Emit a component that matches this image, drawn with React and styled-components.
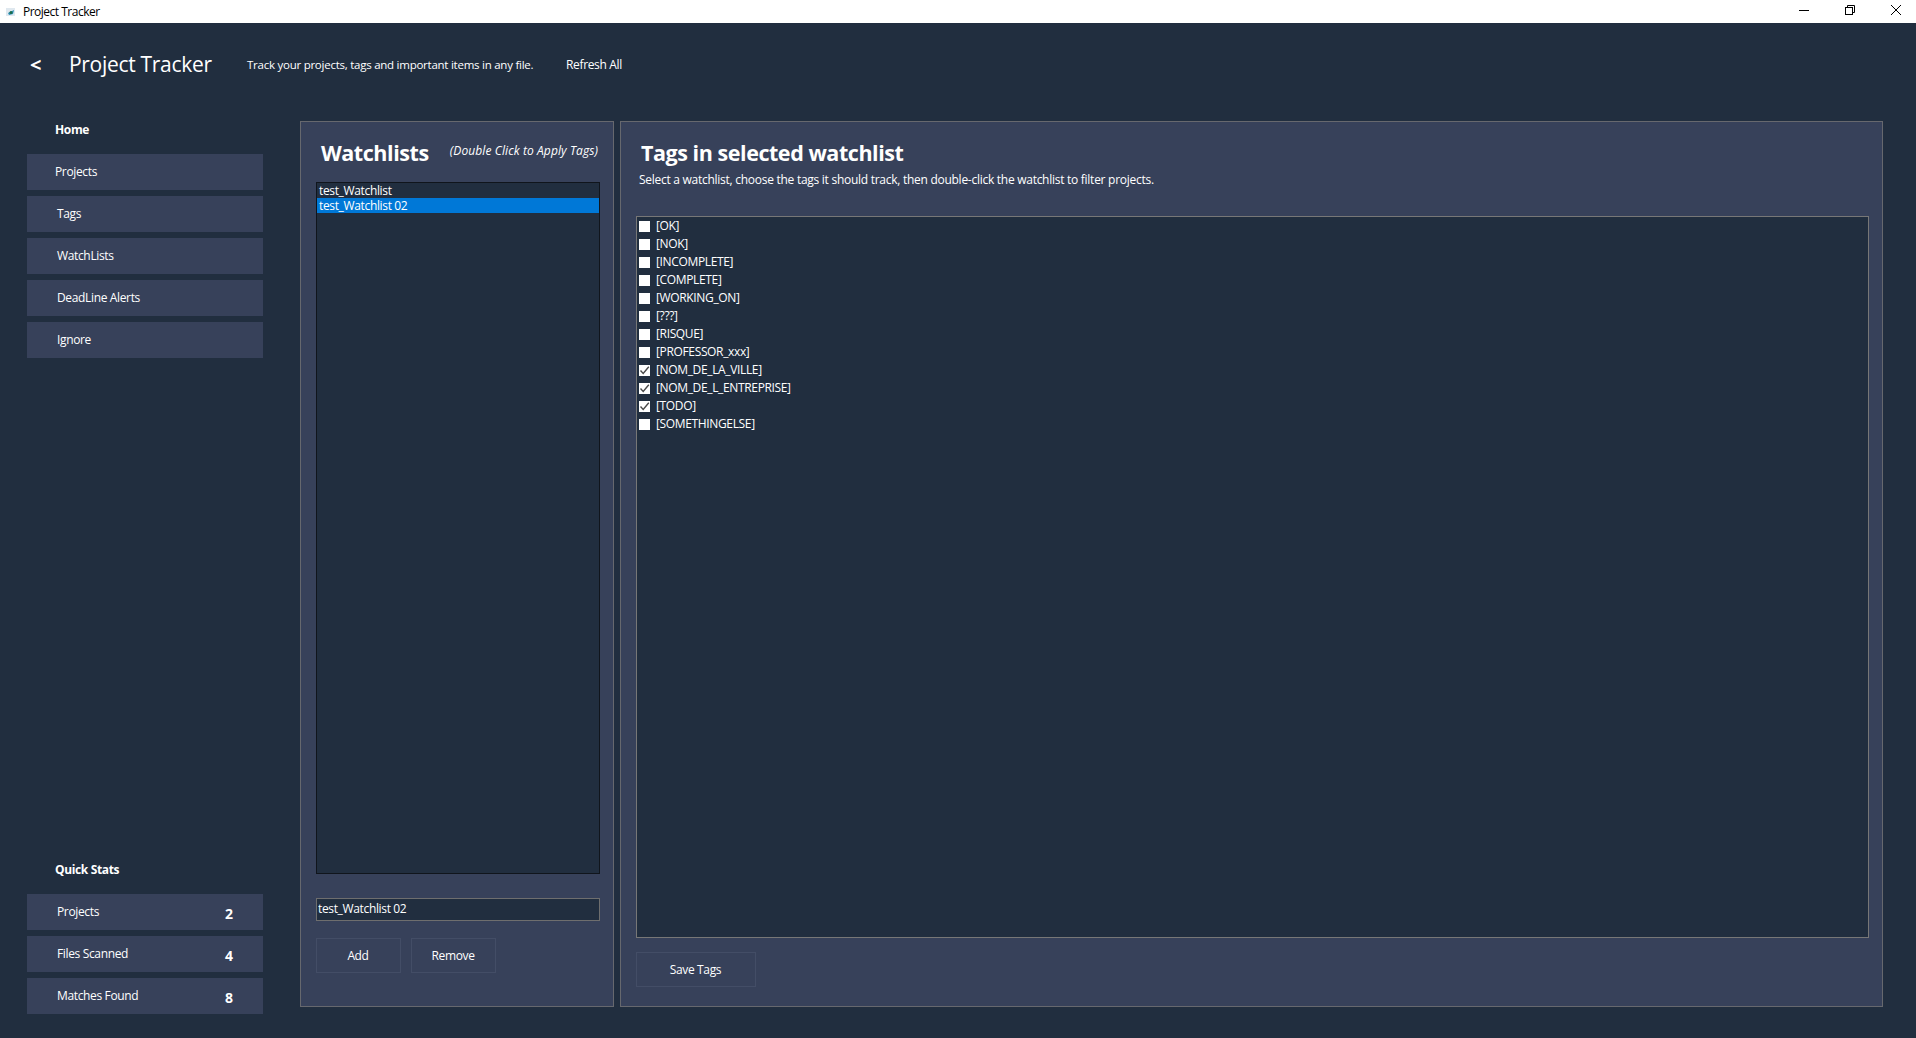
import { createGlobalStyle } from "styled-components";
import styled from "styled-components";

const watchlists = ["test_Watchlist", "test_Watchlist 02"];

const tags = [
  { name: "[OK]" },
  { name: "[NOK]" },
  { name: "[INCOMPLETE]" },
  { name: "[COMPLETE]" },
  { name: "[WORKING_ON]" },
  { name: "[???]" },
  { name: "[RISQUE]" },
  { name: "[PROFESSOR_xxx]" },
  { name: "[NOM_DE_LA_VILLE]", checked: true },
  { name: "[NOM_DE_L_ENTREPRISE]", checked: true },
  { name: "[TODO]", checked: true },
  { name: "[SOMETHINGELSE]" },
];

const navItems = [
  { label: "Projects", inset: 28 },
  { label: "Tags", inset: 30 },
  { label: "WatchLists", inset: 30 },
  { label: "DeadLine Alerts", inset: 30 },
  { label: "Ignore", inset: 30 },
];

const stats = [
  { label: "Projects", value: 2 },
  { label: "Files Scanned", value: 4 },
  { label: "Matches Found", value: 8 },
];

const GlobalStyle = createGlobalStyle`
  html, body {
    margin: 0;
    padding: 0;
    height: 100%;
    overflow: hidden;
    background: #212e3f;
  }
  * {
    box-sizing: border-box;
  }
`;

const Window = styled.div`
  width: 1916px;
  height: 1038px;
  display: flex;
  flex-direction: column;
  background: #212e3f;
  color: #fff;
  font-family: "Open Sans", "Liberation Sans", sans-serif;
  font-size: 12px;
  letter-spacing: -0.35px;
`;

const TitleBar = styled.div`
  height: 23px;
  flex: none;
  display: flex;
  align-items: center;
  background: #fff;
  color: #000;
  padding-left: 6px;
`;

const AppName = styled.span`
  margin-left: 7px;
  flex: 1;
  letter-spacing: -0.5px;
`;

const WinButton = styled.span`
  width: 46px;
  height: 23px;
  display: flex;
  align-items: center;
  justify-content: center;
  padding: 0 0 3px 5px;
`;

const Header = styled.header`
  height: 95px;
  flex: none;
  display: flex;
  align-items: flex-start;
  padding: 26px 0 0 30px;
`;

const BackButton = styled.span`
  width: 39px;
  font-size: 20px;
  font-weight: 700;
  line-height: 32px;
`;

const AppTitle = styled.h1`
  margin: 0;
  width: 178px;
  font-size: 21px;
  font-weight: 400;
  line-height: 30px;
  letter-spacing: -0.3px;
`;

const Tagline = styled.span`
  width: 319px;
  font-size: 11.5px;
  line-height: 32px;
  letter-spacing: -0.25px;
`;

const RefreshLink = styled.span`
  line-height: 32px;
`;

const Body = styled.div`
  height: 896px;
  flex: none;
  display: flex;
  align-items: flex-start;
  padding-left: 27px;
`;

const Sidebar = styled.nav`
  width: 236px;
  height: 100%;
  flex: none;
  display: flex;
  flex-direction: column;
  justify-content: space-between;
`;

const SideGroup = styled.div`
  display: flex;
  flex-direction: column;
  gap: 6px;
`;

const SideHeading = styled.div`
  height: 24px;
  margin-bottom: 6px;
  padding-left: 28px;
  font-weight: 700;
  line-height: 24px;
`;

const SideButton = styled.div`
  height: 36px;
  display: flex;
  align-items: center;
  padding: 0 0 1px ${({ $inset }) => $inset}px;
  background: #37415a;
`;

const StatLabel = styled.span`
  flex: 1;
`;

const StatValue = styled.span`
  width: 38px;
  margin-top: 4px;
  font-size: 14px;
  font-weight: 700;
  letter-spacing: 0;
`;

const Panels = styled.main`
  margin: 3px 0 0 37px;
  height: 886px;
  display: flex;
  gap: 6px;
`;

const Panel = styled.section`
  width: ${({ $width }) => $width}px;
  height: 100%;
  display: flex;
  flex-direction: column;
  background: #37415a;
  border: 1px solid #66686e;
  padding: 0 13px 0 15px;
`;

const PanelHead = styled.div`
  height: ${({ $height }) => $height}px;
  flex: none;
  display: flex;
  align-items: flex-start;
  justify-content: space-between;
  padding: 16px 2px 0 5px;
`;

const PanelTitle = styled.h2`
  margin: 0;
  font-size: 21.5px;
  font-weight: 700;
  line-height: 30px;
  letter-spacing: -0.45px;
`;

const Hint = styled.em`
  font-size: 12px;
  line-height: 26px;
  letter-spacing: 0.1px;
`;

const ListBox = styled.ul`
  list-style: none;
  margin: 0;
  padding: 0;
  height: 692px;
  flex: none;
  background: #212e3f;
  border: 1px solid #10151c;
`;

const ListRow = styled.li`
  height: 15px;
  padding-left: 2px;
  line-height: 16px;
  background: ${({ $selected }) => ($selected ? "#0078d7" : "transparent")};
`;

const NameInput = styled.input`
  display: block;
  width: 100%;
  height: 23px;
  margin-top: 24px;
  padding: 0 2px 3px 1px;
  background: #212e3f;
  border: 1px solid #6e6e6e;
  color: #fff;
  font: inherit;
  letter-spacing: inherit;
  outline: none;
`;

const ButtonRow = styled.div`
  display: flex;
  gap: 10px;
  margin-top: 17px;
`;

const ActionButton = styled.button`
  width: ${({ $width }) => $width}px;
  height: 35px;
  padding: 0 1px 0 0;
  background: transparent;
  border: 1px solid #434d66;
  color: #fff;
  font: inherit;
  letter-spacing: inherit;
`;

const Subtitle = styled.p`
  margin: 0;
  height: 45px;
  flex: none;
  padding-left: 3px;
  line-height: 17px;
  letter-spacing: -0.27px;
`;

const TagBox = styled.div`
  height: 722px;
  flex: none;
  display: flex;
  flex-direction: column;
  background: #212e3f;
  border: 1px solid #777;
`;

const TagRow = styled.label`
  height: 18px;
  flex: none;
  display: flex;
  align-items: center;
  gap: 6px;
  padding: 0 0 2px 2px;
`;

const CheckBox = styled.span`
  width: 11px;
  height: 11px;
  margin-top: 2px;
  flex: none;
  display: flex;
  background: #fff;
`;

const SaveRow = styled.div`
  margin-top: 14px;
`;

function AppIcon() {
  return (
    <svg width="10" height="10" viewBox="0 0 10 10">
      <rect x="0" y="1" width="9" height="8" fill="#dfe8ef" />
      <path d="M2 6 L8 3 L7 7 L3 8 Z" fill="#2a8fb8" />
      <circle cx="5" cy="5.5" r="1.5" fill="#1c6b4a" />
    </svg>
  );
}

function CheckMark() {
  return (
    <svg width="11" height="11" viewBox="0 0 11 11">
      <path d="M1.5 5.5 L4.2 8.4 L9.8 1.8" fill="none" stroke="#4a4a4a" strokeWidth="1.4" />
    </svg>
  );
}

function WindowControls() {
  return (
    <>
      <WinButton>
        <svg width="10" height="10" viewBox="0 0 10 10">
          <path d="M0 5.5 H10" stroke="#000" strokeWidth="1" />
        </svg>
      </WinButton>
      <WinButton>
        <svg width="10" height="10" viewBox="0 0 10 10">
          <path d="M2.5 2.5 V0.5 H9.5 V7.5 H7.5" fill="none" stroke="#000" strokeWidth="1" />
          <rect x="0.5" y="2.5" width="7" height="7" fill="none" stroke="#000" strokeWidth="1" />
        </svg>
      </WinButton>
      <WinButton>
        <svg width="10" height="10" viewBox="0 0 10 10">
          <path d="M0 0 L10 10 M10 0 L0 10" stroke="#000" strokeWidth="1" />
        </svg>
      </WinButton>
    </>
  );
}

export default function App() {
  return (
    <Window>
      <GlobalStyle />
      <TitleBar>
        <AppIcon />
        <AppName>Project Tracker</AppName>
        <WindowControls />
      </TitleBar>

      <Header>
        <BackButton>&lt;</BackButton>
        <AppTitle>Project Tracker</AppTitle>
        <Tagline>Track your projects, tags and important items in any file.</Tagline>
        <RefreshLink>Refresh All</RefreshLink>
      </Header>

      <Body>
        <Sidebar>
          <SideGroup>
            <SideHeading>Home</SideHeading>
            {navItems.map((item) => (
              <SideButton key={item.label} $inset={item.inset}>
                {item.label}
              </SideButton>
            ))}
          </SideGroup>
          <SideGroup>
            <SideHeading>Quick Stats</SideHeading>
            {stats.map((stat) => (
              <SideButton key={stat.label} $inset={30}>
                <StatLabel>{stat.label}</StatLabel>
                <StatValue>{stat.value}</StatValue>
              </SideButton>
            ))}
          </SideGroup>
        </Sidebar>

        <Panels>
          <Panel $width={314}>
            <PanelHead $height={60}>
              <PanelTitle>Watchlists</PanelTitle>
              <Hint>(Double Click to Apply Tags)</Hint>
            </PanelHead>
            <ListBox>
              {watchlists.map((name, i) => (
                <ListRow key={name} $selected={i === 1}>
                  {name}
                </ListRow>
              ))}
            </ListBox>
            <NameInput readOnly value="test_Watchlist 02" />
            <ButtonRow>
              <ActionButton $width={85}>Add</ActionButton>
              <ActionButton $width={85}>Remove</ActionButton>
            </ButtonRow>
          </Panel>

          <Panel $width={1263}>
            <PanelHead $height={49}>
              <PanelTitle>Tags in selected watchlist</PanelTitle>
            </PanelHead>
            <Subtitle>Select a watchlist, choose the tags it should track, then double-click the watchlist to filter projects.</Subtitle>
            <TagBox>
              {tags.map((tag) => (
                <TagRow key={tag.name}>
                  <CheckBox>{tag.checked && <CheckMark />}</CheckBox>
                  {tag.name}
                </TagRow>
              ))}
            </TagBox>
            <SaveRow>
              <ActionButton $width={120}>Save Tags</ActionButton>
            </SaveRow>
          </Panel>
        </Panels>
      </Body>
    </Window>
  );
}
